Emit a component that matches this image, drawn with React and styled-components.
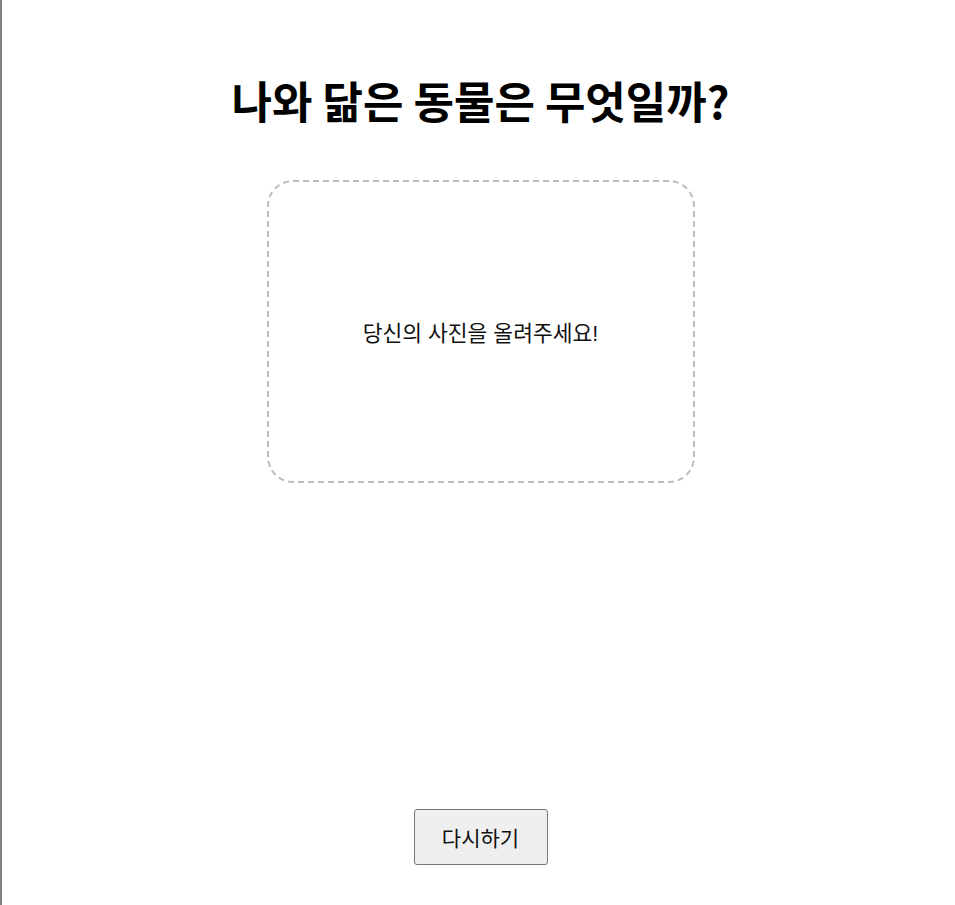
import React from 'react';
import styled, { createGlobalStyle } from 'styled-components';

const GlobalStyle = createGlobalStyle`
  html, body {
    margin: 0;
    padding: 0;
    background: #fff;
  }
  body {
    font-family: 'Liberation Sans', 'Noto Sans CJK KR', sans-serif;
  }
`;

const Page = styled.main`
  box-sizing: border-box;
  min-height: 905px;
  border-left: 2px solid #808080;
  display: flex;
  flex-direction: column;
  align-items: center;
  padding-left: 4px;
`;

const Title = styled.h1`
  margin: 74px 0 0;
  font-family: 'Noto Sans CJK KR', 'Liberation Sans', sans-serif;
  font-size: 44px;
  font-weight: 700;
  line-height: 53px;
  color: #000;
`;

const UploadBox = styled.label`
  box-sizing: border-box;
  margin-top: 53px;
  width: 428px;
  height: 303px;
  border: 2px dashed #bdbdbd;
  border-radius: 26px;
  display: flex;
  align-items: center;
  justify-content: center;
  cursor: pointer;
`;

const Hint = styled.p`
  margin: 0;
  font-size: 21.5px;
  color: #111;
`;

const RetryButton = styled.button`
  margin-top: 326px;
  width: 134px;
  height: 56px;
  font-family: inherit;
  font-size: 21px;
  color: #111;
  background: #efefef;
  border: 1px solid #767676;
  border-radius: 3px;
  cursor: pointer;
`;

export default function App() {
  return (
    <>
      <GlobalStyle />
      <Page>
        <Title>나와 닮은 동물은 무엇일까?</Title>
        <UploadBox>
          <Hint>당신의 사진을 올려주세요!</Hint>
        </UploadBox>
        <RetryButton>다시하기</RetryButton>
      </Page>
    </>
  );
}
